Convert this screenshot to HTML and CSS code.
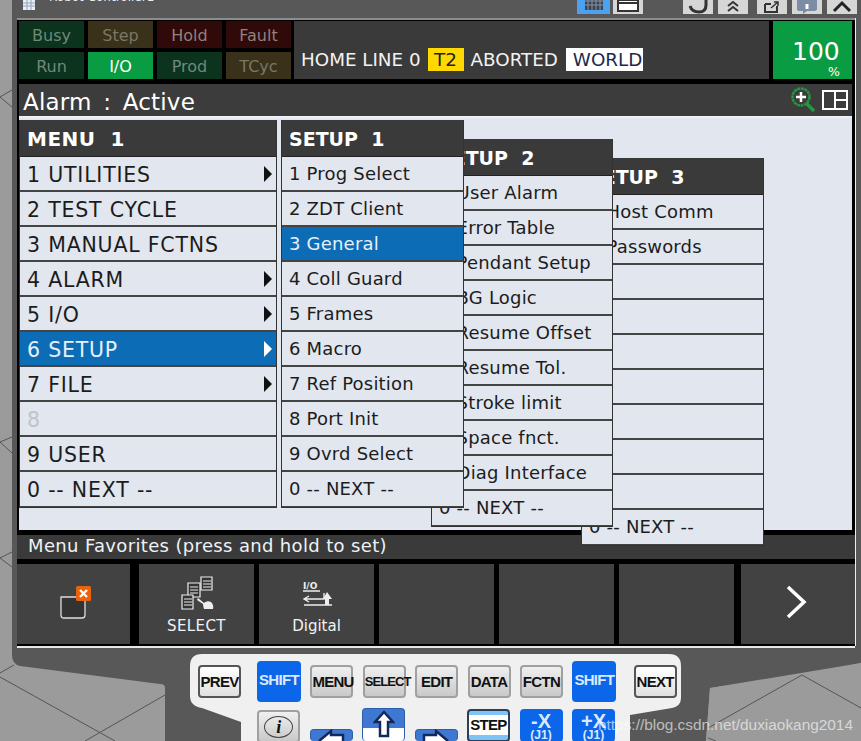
FILE: index.html
```html
<!DOCTYPE html>
<html lang="en">
<head>
    <meta charset="UTF-8">
    <title>Robot Controller1</title>
    <link rel="stylesheet" href="styles.css">
</head>
<body>
<div class="page">
    <!-- floor and pendant body behind everything -->
    <svg class="backdrop" width="861" height="741" viewBox="0 0 861 741">
        <rect width="861" height="741" fill="#9b9b9b"/>
        <path d="M12 0H861V663L710 688L706 741H165V688Q165 684 160 684L20 666Q12 664 12 655Z" fill="#585858"/>
        <path d="M861 663L802 675L710 688L706 741H861Z" fill="#9b9b9b"/>
        <g stroke="#555" stroke-width="1" fill="none">
            <path d="M12 90L0 97L12 107"/>
            <path d="M12 437L0 442L12 453"/>
            <path d="M12 552L0 558L12 567"/>
            <path d="M14 665L0 673M0 677L115 741M165 695L85 741"/>
            <path d="M708 728L802 675L861 708M708 738L716 741"/>
        </g>
    </svg>

    <!-- window title and tool buttons, cut off by the top of the picture -->
    <div class="topbar">
        <svg class="title-icon" width="14" height="11" viewBox="0 0 14 11">
            <path d="M1 0H13V10H1Z" fill="#e8eef4"/>
            <path d="M1 3H13M1 6H13M5 0V10M9 0V10" stroke="#8fa5bd"/>
        </svg>
        <span class="title-text">Robot Controller1</span>
        <div class="tools tools-a">
            <div class="tool tool-on">
                <svg width="20" height="14" viewBox="0 0 20 14"><path d="M1 0H19V12H1Z" fill="#3b4454"/><path d="M4 0V12M8 0V12M12 0V12M16 0V12M1 3H19M1 7H19" stroke="#8a93a3"/></svg>
            </div>
            <div class="tool">
                <svg width="24" height="14" viewBox="0 0 24 14"><path d="M2 0H22V11H2Z" fill="#fff" stroke="#333" stroke-width="2"/><path d="M2 3H22" stroke="#333" stroke-width="2"/></svg>
            </div>
        </div>
        <div class="tools tools-b">
            <div class="tool">
                <svg width="24" height="14" viewBox="0 0 24 14"><path d="M4 6Q6 12 13 12Q20 12 20 5V0" fill="none" stroke="#333" stroke-width="3"/></svg>
            </div>
            <div class="tool">
                <svg width="16" height="14" viewBox="0 0 16 14"><path d="M3 6L8 2L13 6M3 11L8 7L13 11" fill="none" stroke="#333" stroke-width="2"/></svg>
            </div>
            <div class="tool tool-gap">
                <svg width="20" height="14" viewBox="0 0 20 14"><path d="M3 4H9M3 4V12H15V6" fill="none" stroke="#333" stroke-width="2"/><path d="M9 8L16 2M12 2H16V6" fill="none" stroke="#333" stroke-width="1.5"/></svg>
            </div>
            <div class="tool">
                <svg width="24" height="14" viewBox="0 0 24 14"><path d="M2 0H22V9Q22 11 18 11H12L8 14V11H5Q2 11 2 9Z" fill="#7d8ca5"/><path d="M12 4V9" stroke="#fff" stroke-width="3"/></svg>
            </div>
            <div class="tool">
                <svg width="22" height="14" viewBox="0 0 22 14"><path d="M3 11L11 3L19 11" fill="none" stroke="#222" stroke-width="3"/></svg>
            </div>
        </div>
    </div>

    <div class="screen">
        <!-- status lights and line -->
        <div class="status">
            <div class="lights">
                <div class="light green">Busy</div>
                <div class="light olive">Step</div>
                <div class="light red">Hold</div>
                <div class="light red">Fault</div>
                <div class="light green">Run</div>
                <div class="light lit">I/O</div>
                <div class="light green">Prod</div>
                <div class="light olive">TCyc</div>
            </div>
            <div class="statusline">
                <span>HOME LINE 0</span>
                <span class="mode">T2</span>
                <span>ABORTED</span>
                <span class="frame">WORLD</span>
            </div>
            <div class="override">
                <span class="override-num">100</span>
                <span class="override-pct">%</span>
            </div>
        </div>

        <div class="alarmbar">
            <span class="alarm-title">Alarm : Active</span>
            <svg class="zoom-icon" width="26" height="26" viewBox="0 0 26 26">
                <circle cx="11" cy="10" r="8.5" fill="none" stroke="#1f9a3c" stroke-width="2.5" stroke-dasharray="3 .6"/>
                <path d="M16 16L24 24" stroke="#1f9a3c" stroke-width="3.5"/>
                <path d="M6 10H16M11 5V15" stroke="#fff" stroke-width="2.5"/>
            </svg>
            <svg width="26" height="20" viewBox="0 0 26 20">
                <path d="M1 1H25V19H1ZM13 1V19M13 10H25" fill="none" stroke="#fff" stroke-width="2"/>
            </svg>
        </div>

        <div class="content">
            <div class="menu menu-main">
                <div class="menu-head">MENU&nbsp; 1</div>
                <div class="row sub">1 UTILITIES</div>
                <div class="row">2 TEST CYCLE</div>
                <div class="row">3 MANUAL FCTNS</div>
                <div class="row sub">4 ALARM</div>
                <div class="row sub">5 I/O</div>
                <div class="row sub active">6 SETUP</div>
                <div class="row sub">7 FILE</div>
                <div class="row off">8</div>
                <div class="row">9 USER</div>
                <div class="row">0 -- NEXT --</div>
            </div>
            <div class="menu menu-setup1">
                <div class="menu-head">SETUP&nbsp; 1</div>
                <div class="row">1 Prog Select</div>
                <div class="row">2 ZDT Client</div>
                <div class="row active">3 General</div>
                <div class="row">4 Coll Guard</div>
                <div class="row">5 Frames</div>
                <div class="row">6 Macro</div>
                <div class="row">7 Ref Position</div>
                <div class="row">8 Port Init</div>
                <div class="row">9 Ovrd Select</div>
                <div class="row">0 -- NEXT --</div>
            </div>
            <div class="menu menu-setup2">
                <div class="menu-head">SETUP&nbsp; 2</div>
                <div class="row">1 User Alarm</div>
                <div class="row">2 Error Table</div>
                <div class="row">3 Pendant Setup</div>
                <div class="row">4 BG Logic</div>
                <div class="row">5 Resume Offset</div>
                <div class="row">6 Resume Tol.</div>
                <div class="row">7 Stroke limit</div>
                <div class="row">8 Space fnct.</div>
                <div class="row">9 Diag Interface</div>
                <div class="row">0 -- NEXT --</div>
            </div>
            <div class="menu menu-setup3">
                <div class="menu-head">SETUP&nbsp; 3</div>
                <div class="row">1 Host Comm</div>
                <div class="row">2 Passwords</div>
                <div class="row"></div>
                <div class="row"></div>
                <div class="row"></div>
                <div class="row"></div>
                <div class="row"></div>
                <div class="row"></div>
                <div class="row"></div>
                <div class="row">0 -- NEXT --</div>
            </div>
        </div>

        <div class="favbar">Menu Favorites (press and hold to set)</div>

        <!-- softkeys -->
        <div class="softkeys">
            <div class="softkey softkey-first">
                <svg class="softkey-lift" width="34" height="34" viewBox="0 0 34 34">
                    <path d="M4 12H24Q28 12 28 16V30Q28 33 25 33H7Q4 33 4 30Z" fill="#333" stroke="#ddd" stroke-width="1.3"/>
                    <rect x="19" y="1" width="15" height="15" rx="1.5" fill="#e8630c"/>
                    <path d="M23 5L30 12M30 5L23 12" stroke="#fff" stroke-width="2.4"/>
                </svg>
            </div>
            <div class="softkey">
                <svg class="softkey-icon" width="34" height="34" viewBox="0 0 34 34">
                    <g fill="#333" stroke="#eee" stroke-width="1.2">
                        <path d="M21 1H32V14H21Z"/><path d="M8 7H20V21H8Z"/><path d="M2 19H13V33H2Z"/>
                    </g>
                    <path d="M23 5H31M23 8H31M23 11H31M10 11H18M10 14H18M10 17H18M4 23H12M4 26H12M4 29H12" stroke="#eee"/>
                    <path d="M18 22L24 27Q27 24 31 26Q34 29 33 33H24Q23 30 23 28L17 24Z" fill="#eee"/>
                </svg>
                <span class="softkey-label">SELECT</span>
            </div>
            <div class="softkey">
                <svg class="softkey-icon" width="34" height="34" viewBox="0 0 34 34">
                    <text x="3" y="13" class="io-text">I/O</text>
                    <path d="M3 15H20M9 20L4 23L9 26M4 23H24V17M4 29H32" fill="none" stroke="#eee" stroke-width="1.4"/>
                    <path d="M25 23V29H29V23H32L27 16L23 23Z" fill="#eee"/>
                </svg>
                <span>Digital</span>
            </div>
            <div class="softkey"></div>
            <div class="softkey"></div>
            <div class="softkey"></div>
            <div class="softkey softkey-last">
                <svg class="softkey-lift" width="24" height="34" viewBox="0 0 24 34"><path d="M2 2L18 17L2 32" fill="none" stroke="#fff" stroke-width="3.5"/></svg>
            </div>
        </div>
    </div>
    <div class="screen-foot"></div>

    <!-- hardware keys -->
    <div class="keypad">
        <div class="keyrow">
            <div class="key key-frame key-prev">PREV</div>
            <div class="key key-blue key-shift">SHIFT</div>
            <div class="key key-grey">MENU</div>
            <div class="key key-grey key-tight">SELECT</div>
            <div class="key key-grey">EDIT</div>
            <div class="key key-grey">DATA</div>
            <div class="key key-grey">FCTN</div>
            <div class="key key-blue key-shift">SHIFT</div>
            <div class="key key-frame key-next">NEXT</div>
        </div>
        <div class="keyrow keyrow-low">
            <div class="key key-grey key-info"><span class="info-glyph">i</span></div>
            <div class="key key-arrow key-drop">
                <svg width="28" height="12" viewBox="0 0 28 12"><path d="M2 12L14 2V6H26V12" fill="#fff" stroke="#14285c" stroke-width="2.5"/></svg>
            </div>
            <div class="key key-arrow">
                <svg width="22" height="30" viewBox="0 0 22 30"><path d="M11 2L20 12H15V26H7V12H2Z" fill="#fff" stroke="#14285c" stroke-width="2.5"/></svg>
            </div>
            <div class="key key-arrow key-drop">
                <svg width="28" height="12" viewBox="0 0 28 12"><path d="M26 12L14 2V6H2V12" fill="#fff" stroke="#14285c" stroke-width="2.5"/></svg>
            </div>
            <div class="key key-step"><span>STEP</span></div>
            <div class="key key-blue key-jog">-X<small>(J1)</small></div>
            <div class="key key-blue key-jog">+X<small>(J1)</small></div>
        </div>
    </div>

    <div class="watermark">https://blog.csdn.net/duxiaokang2014</div>
</div>
</body>
</html>
```
FILE: styles.css
```css
html, body {
    margin: 0;
    padding: 0;
}
body {
    font-family: "DejaVu Sans", Verdana, sans-serif;
    background: #9b9b9b;
}
.page {
    position: relative;
    width: 861px;
    height: 741px;
    overflow: hidden;
}
.backdrop {
    position: absolute;
    top: 0;
    left: 0;
}
.watermark {
    position: absolute;
    left: 598px;
    top: 716px;
    font-family: "Liberation Sans", Arial, sans-serif;
    font-size: 15.4px;
    color: rgba(255, 255, 255, 0.62);
    white-space: nowrap;
}

/* top strip */
.topbar {
    position: relative;
    height: 18px;
    margin-left: 12px;
    display: flex;
    overflow: hidden;
}
.topbar svg {
    flex: none;
}
.title-icon {
    margin-left: 10px;
}
.title-text {
    flex: none;
    width: 100px;
    margin-left: 13px;
    margin-top: -10px;
    font-size: 12px;
    line-height: 14px;
    height: 14px;
    color: #eee;
    white-space: nowrap;
}
.tools {
    display: flex;
    flex: none;
    height: 14px;
}
.tools-a {
    margin-left: 428px;
    gap: 3px;
}
.tools-b {
    margin-left: 40px;
    gap: 5px;
}
.tool {
    flex: none;
    width: 30px;
    height: 14px;
    background: #d6d6d6;
    display: flex;
    justify-content: center;
    align-items: flex-end;
    overflow: hidden;
    box-sizing: border-box;
}
.tool-on {
    width: 33px;
    background: #4ca2ee;
    border: 2px solid #4ca2ee;
    border-top: none;
}
.tool-gap {
    margin-left: 4px;
}

/* the pendant screen */
.screen {
    position: relative;
    width: 838px;
    height: 628px;
    margin-left: 17px;
    box-sizing: border-box;
    border-top: 2px solid #8d8d8d;
    background: #000;
    box-shadow: 1px 0 0 #eee;
}
.screen-foot {
    position: relative;
    width: 838px;
    height: 2px;
    margin-left: 17px;
    background: #e8e8e8;
}
.status {
    display: flex;
    height: 59px;
    padding: 1px 3px 0 2px;
    box-sizing: border-box;
}
.lights {
    display: grid;
    grid-template-columns: repeat(4, 65px);
    grid-template-rows: 27px 27px;
    gap: 4px;
    width: 272px;
    flex: none;
}
.light {
    font-size: 16px;
    line-height: 29px;
    text-align: center;
}
.green {
    background: #0b331e;
    color: #6f8a78;
}
.olive {
    background: #3a311b;
    color: #7b7762;
}
.red {
    background: #300909;
    color: #93807f;
}
.lit {
    background: #0a9c42;
    color: #fff;
}
.statusline {
    flex: none;
    width: 475px;
    height: 58px;
    margin-left: 3px;
    padding: 18px 0 0 7px;
    box-sizing: border-box;
    background: #3a3a3a;
    color: #f2f2f2;
    font-size: 18.3px;
    display: flex;
    align-items: center;
    gap: 7px;
}
.mode {
    background: #ffd800;
    color: #222;
    width: 36px;
    height: 23px;
    line-height: 23px;
    text-align: center;
}
.frame {
    background: #fff;
    color: #1a2a4a;
    width: 77px;
    height: 23px;
    line-height: 23px;
    padding-left: 7px;
    box-sizing: border-box;
    white-space: nowrap;
    margin-left: 1px;
}
.override {
    flex: none;
    width: 79px;
    height: 58px;
    margin-left: 4px;
    background: #0a9c42;
    color: #fff;
}
.override-num {
    display: block;
    margin-top: 16px;
    margin-left: 19px;
    font-size: 25px;
    line-height: 30px;
}
.override-pct {
    display: block;
    margin-left: 55px;
    margin-top: -2px;
    font-size: 12.5px;
    line-height: 13px;
}
.alarmbar {
    height: 32px;
    margin: 5px 3px 0 2px;
    padding: 0 4px 0 4px;
    background: #3c3c3c;
    color: #fff;
    display: flex;
    align-items: center;
}
.alarm-title {
    font-size: 23px;
    letter-spacing: 0.2px;
    word-spacing: 4px;
    line-height: 36px;
    height: 32px;
    flex: 1;
}
.zoom-icon {
    margin-right: 6px;
}
.content {
    position: relative;
    z-index: 2;
    height: 414px;
    margin: 0 3px 0 2px;
    padding-top: 2px;
    box-sizing: border-box;
    background: #e1e6ef;
    border-top: 2px solid #eef0f4;
    display: flex;
    align-items: flex-start;
}

/* cascading menus */
.menu {
    position: relative;
    flex: none;
    box-sizing: border-box;
    background: #e1e6ef;
    border: 1px solid #333;
    border-top: none;
    color: #1c1c1c;
}
.menu-head {
    height: 37px;
    line-height: 38px;
    padding-left: 7px;
    background: #3a3a3a;
    color: #fff;
    font-weight: bold;
    box-sizing: border-box;
    border-bottom: 1px solid #222;
    white-space: nowrap;
}
.menu-main {
    z-index: 4;
    width: 258px;
}
.menu-main .menu-head {
    font-size: 20px;
    line-height: 39px;
    letter-spacing: 0.5px;
}
.menu-main .row {
    font-size: 20.5px;
    letter-spacing: 0.8px;
    line-height: 36px;
}
.menu-setup1 {
    z-index: 3;
    width: 183px;
    margin-left: 4px;
}
.menu-setup2 {
    z-index: 2;
    width: 182px;
    margin-left: -33px;
    margin-top: 19px;
}
.menu-setup3 {
    z-index: 1;
    width: 183px;
    margin-left: -32px;
    margin-top: 38px;
}
.menu-setup1 .menu-head,
.menu-setup2 .menu-head,
.menu-setup3 .menu-head {
    font-size: 19px;
}
.row {
    position: relative;
    height: 35px;
    line-height: 33px;
    padding-left: 7px;
    font-size: 18px;
    letter-spacing: 0.2px;
    box-sizing: border-box;
    border-bottom: 2px solid #444;
    white-space: nowrap;
}
.row:last-child {
    border-bottom: 1px solid #444;
}
.active {
    background: #0c6db6;
    color: #e8f0f8;
}
.off {
    color: #c0c4c8;
}
.sub::after {
    content: "";
    position: absolute;
    right: 4px;
    top: 9px;
    border-left: 8px solid #111;
    border-top: 8px solid transparent;
    border-bottom: 8px solid transparent;
}
.active.sub::after {
    border-left-color: #fff;
}
.favbar {
    height: 24px;
    margin-top: 5px;
    padding-left: 11px;
    background: #3a3a3a;
    color: #eef2f6;
    font-size: 18px;
    letter-spacing: 0.35px;
    line-height: 22px;
}

/* softkey row */
.softkeys {
    display: flex;
    margin-top: 5px;
    gap: 5px;
    height: 80px;
}
.softkey {
    flex: none;
    width: 115px;
    background: #424242;
    color: #eef2f6;
    font-size: 15px;
    display: flex;
    flex-direction: column;
    align-items: center;
    justify-content: center;
}
.softkey-label {
    letter-spacing: 0.4px;
}
.softkey-first {
    width: 113px;
    margin-right: 4px;
}
.softkey-last {
    width: 114px;
    margin-left: 2px;
}
.softkey-icon {
    margin-bottom: 7px;
    margin-top: 3px;
}
.softkey-lift {
    margin-bottom: 4px;
}
.io-text {
    font-size: 9px;
    font-weight: bold;
    fill: #eee;
}

/* hardware keypad */
.keypad {
    position: relative;
    width: 491px;
    height: 87px;
    margin: 6px 0 0 190px;
    background: #f0f0f0;
    box-sizing: border-box;
    padding: 6px 0 0 8px;
    clip-path: path("M12 0H479Q491 0 491 12V44Q491 52 482 54L440 61V87H51V68L12 54Q0 52 0 42V12Q0 0 12 0Z");
}
.keyrow {
    display: flex;
    align-items: center;
    gap: 9.4px;
    height: 43px;
}
.keyrow-low {
    align-items: flex-start;
    gap: 9.5px;
    margin-left: 59px;
    margin-top: 5px;
}
.key {
    box-sizing: border-box;
    width: 43px;
    height: 33px;
    border-radius: 4px;
    font-family: "Liberation Sans", Arial, sans-serif;
    font-weight: bold;
    font-size: 15px;
    letter-spacing: -0.7px;
    text-align: center;
    line-height: 30px;
    color: #111;
    flex: none;
}
.key-grey {
    background: linear-gradient(#f0f0f0, #c9c9c9);
    border: 2px solid #a0a0a0;
}
.key-frame {
    background: linear-gradient(#fff, #e0e0e0);
    border: 2px solid #555;
}
.key-prev {
    margin-right: 6.6px;
}
.key-next {
    margin-left: 8px;
}
.key-blue {
    background: #0b66ea;
    color: #dbe9ff;
}
.key-shift {
    height: 41px;
    width: 44px;
    line-height: 38px;
}
.key-tight {
    font-size: 13px;
    letter-spacing: -0.9px;
}
.key-info {
    height: 33px;
    margin-top: 2px;
}
.info-glyph {
    display: inline-block;
    width: 27px;
    height: 20px;
    margin-top: 4px;
    line-height: 20px;
    border: 1.5px solid #444;
    border-radius: 50%;
    font-family: "Liberation Serif", serif;
    font-style: italic;
    font-size: 18px;
}
.key-arrow {
    height: 33px;
    background: linear-gradient(#3f78d2 0 60%, #fff 60% 100%);
    border: 1px solid #2f5ea8;
    border-bottom: none;
    display: flex;
    justify-content: center;
    align-items: center;
}
.key-drop {
    margin-top: 21px;
    height: 12px;
    background: #3f78d2;
    align-items: flex-end;
}
.key-step {
    margin-top: 1px;
    background: #7fc4f6;
    border: 2px solid #2b3f5a;
    padding-top: 4px;
    line-height: 20px;
}
.key-step span {
    display: block;
    background: #fff;
    height: 20px;
    font-size: 15px;
}
.key-jog {
    margin-top: 1px;
    font-size: 20px;
    letter-spacing: 0;
    line-height: 18px;
    padding-top: 3px;
}
.key-jog small {
    display: block;
    font-size: 12px;
    line-height: 10px;
}
```
